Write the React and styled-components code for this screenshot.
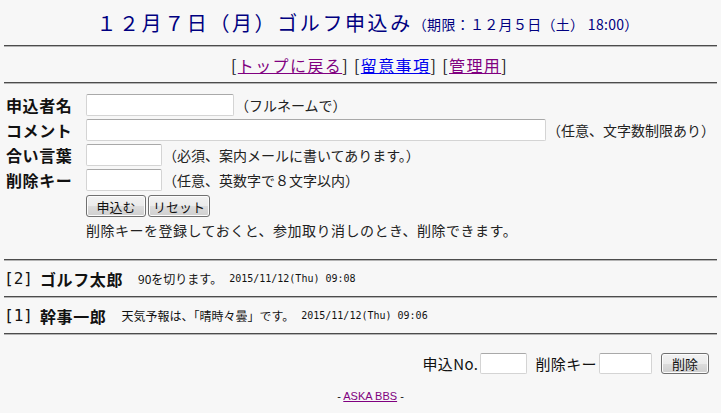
import React from "react";
import styled, { createGlobalStyle } from "styled-components";

const entries = [
    { no: 2, name: "ゴルフ太郎", comment: "90を切ります。", date: "2015/11/12(Thu) 09:08" },
    { no: 1, name: "幹事一郎", comment: "天気予報は、「晴時々曇」です。", date: "2015/11/12(Thu) 09:06" },
];

const GlobalStyle = createGlobalStyle`
    html, body {
        margin: 0;
        padding: 0;
        background: #f7f7f7;
    }
    body {
        font-family: "Noto Sans CJK JP", "Liberation Sans", sans-serif;
        color: #111;
    }
`;

const App = () => {
    return (
        <Page>
            <GlobalStyle />
            <TitleBar>
                <MainTitle>１２月７日（月）ゴルフ申込み</MainTitle>
                <SubTitle>（期限：１２月５日（土） 18:00）</SubTitle>
            </TitleBar>
            <Rule />
            <NavBar>
                [<NavLink className="visited">トップに戻る</NavLink>]{" "}
                [<NavLink>留意事項</NavLink>]{" "}
                [<NavLink className="visited">管理用</NavLink>]
            </NavBar>
            <Rule />

            <FormArea>
                <Label>申込者名</Label>
                <Field>
                    <TextBox $w={148} />
                    <Note>（フルネームで）</Note>
                </Field>
                <Label>コメント</Label>
                <Field>
                    <TextBox $w={460} />
                    <Note>（任意、文字数制限あり）</Note>
                </Field>
                <Label>合い言葉</Label>
                <Field>
                    <TextBox $w={76} />
                    <Note>（必須、案内メールに書いてあります。）</Note>
                </Field>
                <Label>削除キー</Label>
                <Field>
                    <TextBox $w={76} />
                    <Note>（任意、英数字で８文字以内）</Note>
                </Field>
                <span />
                <Buttons>
                    <Button $w={60}>申込む</Button>
                    <Button $w={62}>リセット</Button>
                </Buttons>
                <span />
                <Hint>削除キーを登録しておくと、参加取り消しのとき、削除できます。</Hint>
            </FormArea>

            <Rule />
            {entries.map((e) => (
                <React.Fragment key={e.no}>
                    <EntryRow>
                        <EntryNo>[{e.no}]</EntryNo>
                        <EntryName>{e.name}</EntryName>
                        <EntryComment>{e.comment}</EntryComment>
                        <EntryDate>{e.date}</EntryDate>
                    </EntryRow>
                    <Rule />
                </React.Fragment>
            ))}

            <DeleteForm>
                <span>申込No.</span>
                <TextBox $w={47} />
                <span className="key">削除キー</span>
                <TextBox $w={53} />
                <Button $w={48} className="del">削除</Button>
            </DeleteForm>

            <Footer>
                - <a>ASKA BBS</a> -
            </Footer>
        </Page>
    );
};

const Page = styled.div`
    width: 721px;
    height: 413px;
    padding: 0 4px;
    box-sizing: border-box;
    overflow: hidden;
`;

const TitleBar = styled.div`
    height: 45px;
    display: flex;
    align-items: center;
    justify-content: center;
    padding-left: 14px;
    color: #000080;
    white-space: nowrap;
`;

const MainTitle = styled.span`
    font-size: 20px;
    letter-spacing: 2.6px;
`;

const SubTitle = styled.span`
    font-size: 14px;
    letter-spacing: 0.3px;
    margin-top: 3px;
`;

const Rule = styled.div`
    height: 0;
    border-top: 1px solid #4c4c4c;
    border-bottom: 1px solid #b4b4b4;
`;

const NavBar = styled.div`
    height: 35px;
    display: flex;
    align-items: center;
    justify-content: center;
    padding-left: 18px;
    font-size: 16px;
    letter-spacing: 1.4px;
    white-space: pre;
    color: #111;
`;

const NavLink = styled.a`
    color: #0000ee;
    text-decoration: underline;
    cursor: pointer;

    &.visited {
        color: #800080;
    }
`;

const FormArea = styled.div`
    display: grid;
    grid-template-columns: 80px auto;
    grid-auto-rows: 22px;
    row-gap: 3px;
    padding: 10px 0 0 2px;
    height: 175px;
    box-sizing: border-box;
`;

const Label = styled.div`
    display: flex;
    align-items: center;
    font-size: 16px;
    font-weight: 700;
    letter-spacing: 0.6px;
`;

const Field = styled.div`
    display: flex;
    align-items: center;
    gap: 1px;
`;

const TextBox = styled.input`
    width: ${(p) => p.$w}px;
    height: 22px;
    box-sizing: border-box;
    border: 1px solid #d4d4d4;
    border-top-color: #a9a9a9;
    border-radius: 2px;
    background: #fff;
    padding: 0 3px;
    outline: none;
`;

const Note = styled.span`
    font-size: 14px;
    color: #222;
    white-space: nowrap;
`;

const Buttons = styled.div`
    display: flex;
    gap: 2px;
    margin-top: 1px;
`;

const Button = styled.button`
    width: ${(p) => p.$w}px;
    height: 22px;
    padding: 0;
    border: 1px solid #707070;
    border-radius: 3px;
    background: linear-gradient(#f2f2f2, #ebebeb 50%, #dddddd 51%, #cfcfcf);
    box-shadow: inset 0 0 0 1px #fcfcfc;
    font-family: "Noto Sans CJK JP", sans-serif;
    font-size: 13px;
    color: #111;
`;

const Hint = styled.div`
    display: flex;
    align-items: center;
    font-size: 14px;
    letter-spacing: 0.5px;
    color: #222;
`;

const EntryRow = styled.div`
    height: 35px;
    display: flex;
    align-items: center;
    white-space: nowrap;
`;

const EntryNo = styled.span`
    font-family: "DejaVu Sans Mono", monospace;
    font-size: 16px;
    width: 36px;
`;

const EntryName = styled.span`
    font-size: 16px;
    font-weight: 700;
    letter-spacing: 0.6px;
`;

const EntryComment = styled.span`
    font-size: 12px;
    margin-left: 15px;
`;

const EntryDate = styled.span`
    font-family: "DejaVu Sans Mono", monospace;
    font-size: 10px;
    margin-left: 7px;
`;

const DeleteForm = styled.div`
    display: flex;
    align-items: center;
    justify-content: flex-end;
    margin-top: 18px;
    padding-right: 8px;
    font-size: 15px;
    letter-spacing: 0.4px;
    color: #111;

    & .key {
        margin-left: 8px;
    }

    & .del {
        margin-left: 9px;
        height: 21px;
    }

    & input {
        height: 21px;
        margin-left: 2px;
    }
`;

const Footer = styled.div`
    margin-top: 16px;
    text-align: center;
    padding-left: 20px;
    font-family: "Liberation Sans", sans-serif;
    font-size: 11px;

    & a {
        color: #800080;
        text-decoration: underline;
    }
`;

export default App;
